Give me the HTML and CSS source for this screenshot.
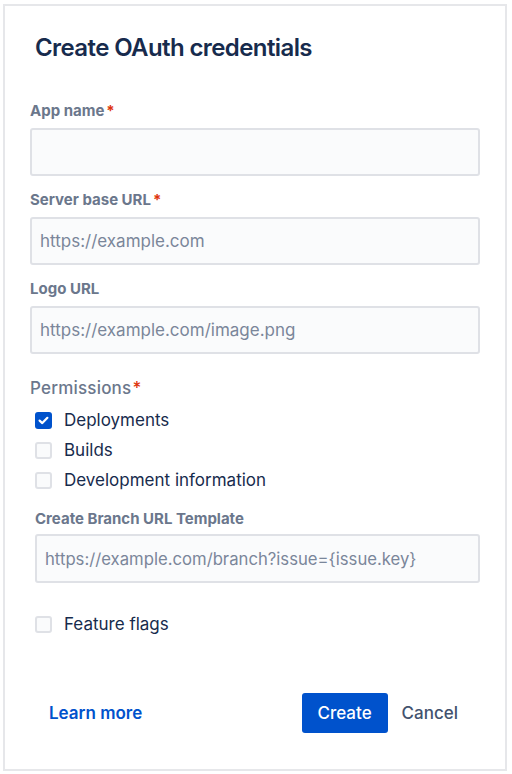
FILE: index.html
```html
<!DOCTYPE html>
<html lang="en">
<head>
<meta charset="utf-8">
<title>Create OAuth credentials</title>
<link rel="stylesheet" href="styles.css">
</head>
<body>
<div class="frame">
  <h1 class="title">Create OAuth credentials</h1>
  <form class="form">
    <div class="field">
      <label class="label">App name<span class="req">*</span></label>
      <input class="input" type="text">
    </div>
    <div class="field">
      <label class="label">Server base URL<span class="req">*</span></label>
      <input class="input" type="text" placeholder="https://example.com">
    </div>
    <div class="field">
      <label class="label">Logo URL</label>
      <input class="input" type="text" placeholder="https://example.com/image.png">
    </div>
    <div class="perms">
      <div class="perms-title">Permissions<span class="req">*</span></div>
      <div class="checks">
        <div class="check"><span class="box checked"><svg viewBox="0 0 17 17" width="17" height="17"><path d="M4.6 8.6 L7.3 11.1 L12.4 5.8" fill="none" stroke="#fff" stroke-width="2.2" stroke-linecap="round" stroke-linejoin="round"/></svg></span><span class="check-text">Deployments</span></div>
        <div class="check"><span class="box"></span><span class="check-text">Builds</span></div>
        <div class="check"><span class="box"></span><span class="check-text">Development information</span></div>
      </div>
      <div class="field sub">
        <label class="label">Create Branch URL Template</label>
        <input class="input" type="text" placeholder="https://example.com/branch?issue={issue.key}">
      </div>
      <div class="check flags"><span class="box"></span><span class="check-text">Feature flags</span></div>
    </div>
  </form>
  <div class="footer">
    <a class="link" href="#">Learn more</a>
    <div class="actions">
      <button class="btn primary" type="button">Create</button>
      <button class="btn subtle" type="button">Cancel</button>
    </div>
  </div>
</div>
</body>
</html>
```

FILE: styles.css
```css
* { box-sizing: border-box; }
html, body { margin: 0; padding: 0; background: #ffffff; }
body {
  font-family: Inter, "Noto Sans", sans-serif;
  color: #172b4d;
}
.frame {
  margin: 4px 0 0 3px;
  width: 504px;
  height: 767px;
  border: 2px solid #e6e7ea;
  display: flex;
  flex-direction: column;
  padding: 0 25px;
}
.title {
  margin: 27px 0 0 5px;
  font-size: 24px;
  line-height: 30px;
  font-weight: 600;
  color: #172b4d;
  letter-spacing: -0.6px;
}
.form {
  display: flex;
  flex-direction: column;
  margin-top: 40px;
}
.field {
  display: flex;
  flex-direction: column;
  margin-bottom: 16px;
}
.label {
  font-size: 15px;
  line-height: 16px;
  font-weight: 700;
  color: #6b778c;
  margin-bottom: 9px;
}
.req { color: #de350b; margin-left: 2px; }
.input {
  height: 48px;
  width: 100%;
  border: 2px solid #dfe1e6;
  border-radius: 3px;
  background: #fafbfc;
  padding: 0 8px;
  font-family: inherit;
  font-size: 17px;
  color: #172b4d;
  outline: none;
}
.input::placeholder { color: #7a869a; }
.perms { margin-top: 8px; }
.perms-title {
  font-size: 17px;
  line-height: 20px;
  font-weight: 500;
  color: #6b778c;
  letter-spacing: 0.2px;
}
.perms-title .req { margin-left: 1px; }
.checks { margin-top: 7px; display: flex; flex-direction: column; }
.check {
  height: 30px;
  display: flex;
  align-items: center;
  padding-left: 5px;
  gap: 12px;
}
.box {
  width: 17px;
  height: 17px;
  border-radius: 3px;
  border: 2px solid #dfe1e6;
  background: #fafbfc;
  flex: none;
  display: block;
}
.box.checked { border: none; background: #0052cc; }
.box svg { display: block; }
.check-text { font-size: 17px; color: #172b4d; }
.field.sub { margin: 16px 0 0 5px; }
.field.sub .label { margin-bottom: 7px; }
.field.sub .input { height: 49px; font-size: 16.7px; }
.flags { margin-top: 26px; }
.footer {
  margin-top: auto;
  margin-bottom: 36px;
  display: flex;
  align-items: center;
  justify-content: space-between;
  padding-left: 19px;
  padding-right: 22px;
}
.link {
  color: #0052cc;
  text-decoration: none;
  font-size: 17px;
  font-weight: 600;
}
.actions { display: flex; align-items: center; }
.btn {
  font-family: inherit;
  font-size: 17px;
  font-weight: 500;
  border: none;
  border-radius: 3px;
  height: 40px;
  cursor: pointer;
}
.primary {
  background: #0052cc;
  color: #ffffff;
  width: 86px;
}
.subtle {
  background: transparent;
  color: #42526e;
  padding: 0 0 0 14px;
}
```
